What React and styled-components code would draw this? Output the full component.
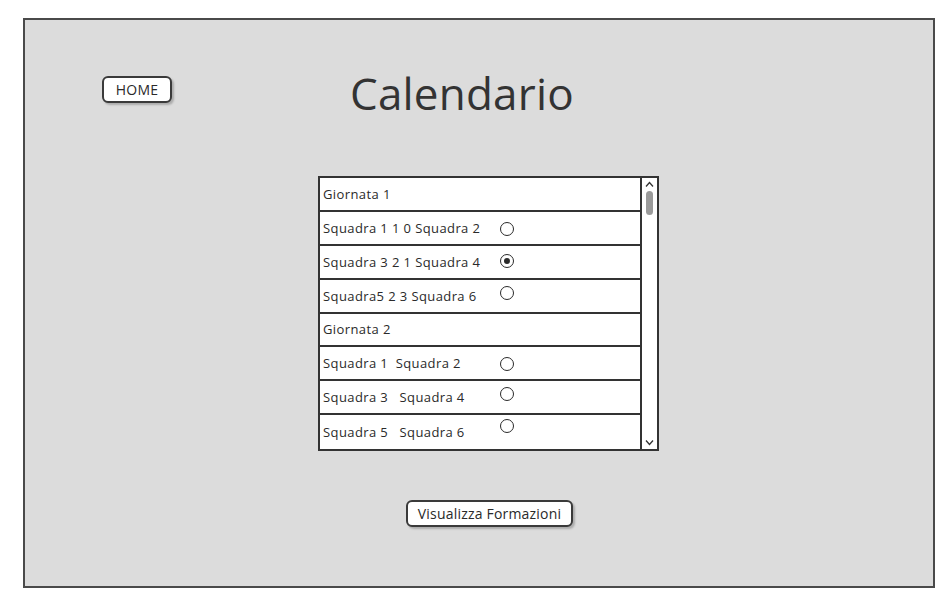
import React from "react";
import styled, { createGlobalStyle } from "styled-components";

const Global = createGlobalStyle`
  html, body { margin: 0; padding: 0; background: #ffffff; }
  body { font-family: "Open Sans", "Liberation Sans", sans-serif; color: #333; }
`;

const Frame = styled.div`
  box-sizing: border-box;
  margin: 18px 0 0 23px;
  width: 912px;
  height: 570px;
  background: #dcdcdc;
  border: 2px solid #4a4a4a;
  display: flex;
  flex-direction: column;
`;

const Header = styled.div`
  display: flex;
  align-items: flex-start;
  padding: 48px 0 0 77px;
  gap: 178px;
`;

const SketchButton = styled.button`
  box-sizing: border-box;
  height: 27px;
  margin-top: ${(p) => p.$top || 0}px;
  margin-left: ${(p) => p.$left || 0}px;
  align-self: flex-start;
  width: ${(p) => p.$width}px;
  padding: 0;
  background: #ffffff;
  border: 2px solid #3a3a3a;
  border-radius: 6px;
  box-shadow: 2px 2px 2px rgba(0, 0, 0, 0.22);
  font-family: "Open Sans", "Liberation Sans", sans-serif;
  font-size: 14px;
  letter-spacing: 0.2px;
  color: #2a2a2a;
  display: flex;
  align-items: center;
  justify-content: center;
`;

const Title = styled.h1`
  margin: 0;
  font-family: "Open Sans", "Liberation Sans", sans-serif;
  font-weight: 400;
  font-size: 44px;
  line-height: 50px;
  color: #333;
  letter-spacing: 0.2px;
`;

const ListBox = styled.div`
  box-sizing: border-box;
  margin: 58px 0 0 293px;
  width: 341px;
  height: 275px;
  display: flex;
  background: #ffffff;
  border: 2px solid #333;
`;

const Rows = styled.div`
  flex: 1;
  display: flex;
  flex-direction: column;
`;

const Row = styled.div`
  box-sizing: border-box;
  height: 34px;
  display: flex;
  align-items: center;
  padding-left: 3px;
  border-bottom: ${(p) => (p.$last ? "none" : "2px solid #333")};
  font-size: 13px;
  letter-spacing: 0.4px;
  color: #2a2a2a;
`;

const Label = styled.span`
  width: 177px;
  white-space: pre;
`;

const Radio = styled.span`
  box-sizing: border-box;
  width: 14px;
  height: 14px;
  border-radius: 50%;
  border: 1.5px solid #2a2a2a;
  background: #fff;
  display: flex;
  align-items: center;
  justify-content: center;
  transform: translateY(${(p) => p.$lift || 0}px);
`;

const Dot = styled.span`
  width: 6px;
  height: 6px;
  border-radius: 50%;
  background: #2a2a2a;
`;

const Scrollbar = styled.div`
  width: 17px;
  border-left: 2px solid #333;
  display: flex;
  flex-direction: column;
  align-items: center;
  padding-top: 3px;
  box-sizing: border-box;
`;

const Thumb = styled.div`
  width: 7px;
  height: 24px;
  margin-top: 3px;
  border-radius: 4px;
  background: #9a9a9a;
`;

const Spacer = styled.div`
  flex: 1;
`;

const Caret = ({ down }) => (
  <svg width="9" height="7" viewBox="0 0 9 7" style={{ marginBottom: down ? 3 : 0 }}>
    <polyline
      points={down ? "1,1.5 4.5,5.5 8,1.5" : "1,5.5 4.5,1.5 8,5.5"}
      fill="none"
      stroke="#333"
      strokeWidth="1.3"
    />
  </svg>
);

const rows = [
  { label: "Giornata 1" },
  { label: "Squadra 1 1 0 Squadra 2", radio: true, lift: 1 },
  { label: "Squadra 3 2 1 Squadra 4", radio: true, checked: true, lift: -1 },
  { label: "Squadra5 2 3 Squadra 6", radio: true, lift: -3 },
  { label: "Giornata 2" },
  { label: "Squadra 1  Squadra 2", radio: true, lift: 1 },
  { label: "Squadra 3   Squadra 4", radio: true, lift: -3 },
  { label: "Squadra 5   Squadra 6", radio: true, lift: -6 },
];

export default function App() {
  return (
    <>
      <Global />
      <Frame>
        <Header>
          <SketchButton $width={70} $top={8}>HOME</SketchButton>
          <Title>Calendario</Title>
        </Header>
        <ListBox>
          <Rows>
            {rows.map((r, i) => (
              <Row key={i} $last={i === rows.length - 1}>
                <Label>{r.label}</Label>
                {r.radio && (
                  <Radio $lift={r.lift}>{r.checked && <Dot />}</Radio>
                )}
              </Row>
            ))}
          </Rows>
          <Scrollbar>
            <Caret />
            <Thumb />
            <Spacer />
            <Caret down />
          </Scrollbar>
        </ListBox>
        <SketchButton $width={167} $top={49} $left={381}>
          Visualizza Formazioni
        </SketchButton>
      </Frame>
    </>
  );
}
